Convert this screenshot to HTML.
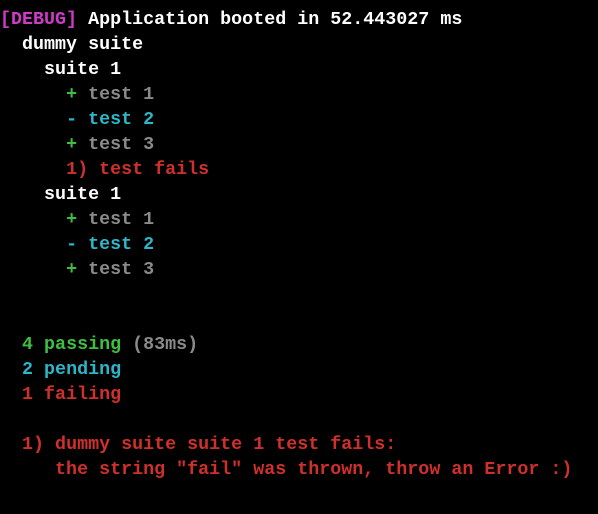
<!DOCTYPE html><html><head><style>
html,body{margin:0;background:#000;width:598px;height:514px;overflow:hidden}
pre{margin:0;position:absolute;left:0;top:7px;font-family:"Liberation Mono",monospace;font-size:18.35px;line-height:25px;color:#fff;font-weight:bold}
.m{color:#cf3bc6}.g{color:#3fbf3f}.c{color:#2cb6c8}.r{color:#d0302b}.y{color:#8a8a8a}
</style></head><body><pre><span class="m">[DEBUG]</span> Application booted in 52.443027 ms
  dummy suite
    suite 1
      <span class="g">+</span> <span class="y">test 1</span>
      <span class="c">- test 2</span>
      <span class="g">+</span> <span class="y">test 3</span>
      <span class="r">1) test fails</span>
    suite 1
      <span class="g">+</span> <span class="y">test 1</span>
      <span class="c">- test 2</span>
      <span class="g">+</span> <span class="y">test 3</span>


  <span class="g">4 passing</span> <span class="y">(83ms)</span>
  <span class="c">2 pending</span>
  <span class="r">1 failing</span>

  <span class="r">1) dummy suite suite 1 test fails:</span>
     <span class="r">the string "fail" was thrown, throw an Error :)</span>
</pre></body></html>
